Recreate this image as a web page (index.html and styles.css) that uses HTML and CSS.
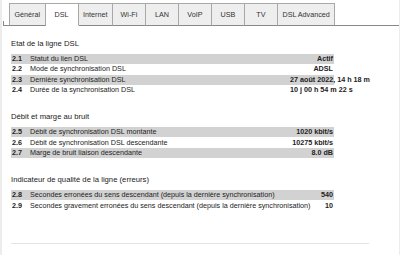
FILE: index.html
```html
<!DOCTYPE html>
<html lang="fr">
<head>
    <meta charset="UTF-8">
    <title>DSL</title>
    <link rel="stylesheet" href="styles.css">
</head>
<body>
    <div class="frame">
        <div class="tabbar">
            <span class="tab-lead"></span>
            <a class="tab">Général</a>
            <a class="tab active">DSL</a>
            <a class="tab">Internet</a>
            <a class="tab">Wi-Fi</a>
            <a class="tab">LAN</a>
            <a class="tab">VoIP</a>
            <a class="tab">USB</a>
            <a class="tab">TV</a>
            <a class="tab">DSL Advanced</a>
            <span class="tab-fill"></span>
        </div>

        <div class="content">
            <h2>Etat de la ligne DSL</h2>
            <table class="info">
                <tr class="odd"><td class="num">2.1</td><td class="label">Statut du lien DSL</td><td class="val">Actif</td></tr>
                <tr><td class="num">2.2</td><td class="label">Mode de synchronisation DSL</td><td class="val">ADSL</td></tr>
                <tr class="odd"><td class="num">2.3</td><td class="label">Dernière synchronisation DSL</td><td class="val">27 août 2022, 14 h 18 m</td></tr>
                <tr><td class="num">2.4</td><td class="label">Durée de la synchronisation DSL</td><td class="val">10 j 00 h 54 m 22 s</td></tr>
            </table>

            <h2>Débit et marge au bruit</h2>
            <table class="info">
                <tr class="odd"><td class="num">2.5</td><td class="label">Débit de synchronisation DSL montante</td><td class="val">1020 kbit/s</td></tr>
                <tr><td class="num">2.6</td><td class="label">Débit de synchronisation DSL descendante</td><td class="val">10275 kbit/s</td></tr>
                <tr class="odd"><td class="num">2.7</td><td class="label">Marge de bruit liaison descendante</td><td class="val">8.0 dB</td></tr>
            </table>

            <h2>Indicateur de qualité de la ligne (erreurs)</h2>
            <table class="info">
                <tr class="odd"><td class="num">2.8</td><td class="label">Secondes erronées du sens descendant (depuis la dernière synchronisation)</td><td class="val">540</td></tr>
                <tr><td class="num">2.9</td><td class="label">Secondes gravement erronées du sens descendant (depuis la dernière synchronisation)</td><td class="val">10</td></tr>
            </table>
        </div>
        <hr>
    </div>
</body>
</html>
```

FILE: styles.css
```css
body {
    margin: 0;
    font-family: "Liberation Sans", Arial, sans-serif;
    font-size: 7.2px;
    color: #222;
    background: #fff;
}
.frame {
    width: 400px;
    height: 255px;
    box-sizing: border-box;
    border-left: 2px solid #ececec;
    border-right: 1px solid #ececec;
    overflow: hidden;
}
.tabbar {
    display: flex;
    align-items: flex-end;
    padding-top: 4px;
    height: 22px;
}
.tab-lead {
    width: 5px;
    height: 4px;
    margin-left: 1px;
    border-left: 1px solid #888;
    border-bottom: 1px solid #888;
}
.tab {
    box-sizing: border-box;
    min-width: 33px;
    height: 23px;
    padding: 0 4.5px;
    line-height: 22px;
    text-align: center;
    background: #eeeeee;
    border: 1px solid #a8a8a8;
    border-left: none;
    border-bottom: 1px solid #888;
    color: #333;
}
.tab:first-of-type {
    border-left: 1px solid #a8a8a8;
}
.tab.active {
    background: #fff;
    border-bottom-color: #fff;
}
.tab-fill {
    flex: 1;
    border-bottom: 1px solid #888;
}
.content {
    padding: 0 65px 0 9px;
}
h2 {
    font-size: 7.7px;
    font-weight: normal;
    color: #222;
    height: 10px;
    line-height: 10px;
    margin: 17px 0 5px 0;
}
h2:first-child {
    margin-top: 13px;
}
.info {
    width: 100%;
    table-layout: fixed;
    border-collapse: collapse;
}
.info td {
    padding: 0;
    height: 10.3px;
    line-height: 10px;
    white-space: nowrap;
}
.info tr.odd td {
    background: #d2d2d2;
}
.info td.num {
    width: 19px;
    font-weight: bold;
    padding-left: 1px;
    box-sizing: border-box;
}
.info td.label {
    width: 260px;
}
.info td.val {
    text-align: right;
    font-weight: bold;
    padding-right: 1px;
}
hr {
    margin: 32px 30px 0 9px;
    border: none;
    border-top: 1px solid #e4e4e4;
}
```
